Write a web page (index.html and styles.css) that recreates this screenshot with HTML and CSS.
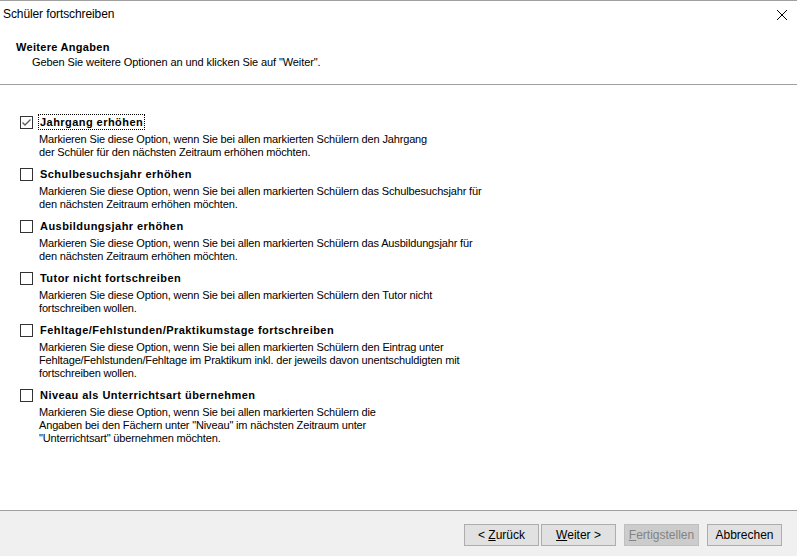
FILE: index.html
```html
<!DOCTYPE html>
<html>
<head>
  <title>Schüler fortschreiben</title>
  <link rel="stylesheet" href="styles.css">
</head>

<body>
  <div id="dialog">
    <div class="topline"></div>

    <div class="titlebar">
      <span class="title">Schüler fortschreiben</span>
      <span class="close">
        <svg width="12" height="12" viewBox="0 0 12 12">
          <path d="M1 1 L11 11 M11 1 L1 11" stroke="#000" stroke-width="1" fill="none"/>
        </svg>
      </span>
    </div>

    <div class="header">
      <div class="header-title">Weitere Angaben</div>
      <div class="header-sub">Geben Sie weitere Optionen an und klicken Sie auf "Weiter".</div>
    </div>

    <main class="options">
      <div class="option">
        <div class="option-row">
          <span class="check checked">
            <svg width="11" height="11" viewBox="0 0 11 11">
              <path d="M1.5 5.5 L4 8 L9.5 2.5" stroke="#5a5a5a" stroke-width="1.3" fill="none"/>
            </svg>
          </span>
          <span class="label focused">Jahrgang erhöhen</span>
        </div>
        <p class="desc">Markieren Sie diese Option, wenn Sie bei allen markierten Schülern den Jahrgang<br>der Schüler für den nächsten Zeitraum erhöhen möchten.</p>
      </div>

      <div class="option">
        <div class="option-row">
          <span class="check"></span>
          <span class="label">Schulbesuchsjahr erhöhen</span>
        </div>
        <p class="desc">Markieren Sie diese Option, wenn Sie bei allen markierten Schülern das Schulbesuchsjahr für<br>den nächsten Zeitraum erhöhen möchten.</p>
      </div>

      <div class="option">
        <div class="option-row">
          <span class="check"></span>
          <span class="label">Ausbildungsjahr erhöhen</span>
        </div>
        <p class="desc">Markieren Sie diese Option, wenn Sie bei allen markierten Schülern das Ausbildungsjahr für<br>den nächsten Zeitraum erhöhen möchten.</p>
      </div>

      <div class="option">
        <div class="option-row">
          <span class="check"></span>
          <span class="label">Tutor nicht fortschreiben</span>
        </div>
        <p class="desc">Markieren Sie diese Option, wenn Sie bei allen markierten Schülern den Tutor nicht<br>fortschreiben wollen.</p>
      </div>

      <div class="option">
        <div class="option-row">
          <span class="check"></span>
          <span class="label">Fehltage/Fehlstunden/Praktikumstage fortschreiben</span>
        </div>
        <p class="desc">Markieren Sie diese Option, wenn Sie bei allen markierten Schülern den Eintrag unter<br>Fehltage/Fehlstunden/Fehltage im Praktikum inkl. der jeweils davon unentschuldigten mit<br>fortschreiben wollen.</p>
      </div>

      <div class="option">
        <div class="option-row">
          <span class="check"></span>
          <span class="label">Niveau als Unterrichtsart übernehmen</span>
        </div>
        <p class="desc">Markieren Sie diese Option, wenn Sie bei allen markierten Schülern die<br>Angaben bei den Fächern unter "Niveau" im nächsten Zeitraum unter<br>"Unterrichtsart" übernehmen möchten.</p>
      </div>
    </main>

    <div class="footer">
      <button class="back">&lt; <u>Z</u>urück</button>
      <button class="next"><u>W</u>eiter &gt;</button>
      <button class="disabled"><u>F</u>ertigstellen</button>
      <button class="cancel">Abbrechen</button>
    </div>
  </div>
</body>
</html>
```

FILE: styles.css
```css
body {
  margin: 0;
  background: #FFFFFF;
  color: #000000;
  font-family: 'Liberation Sans', Arial, sans-serif;
  font-size: 11px;
}

#dialog {
  width: 797px;
  height: 556px;
  display: flex;
  flex-direction: column;
  overflow: hidden;
}

.topline {
  height: 1px;
  background: #A0A0A0;
}

.titlebar {
  height: 29px;
  display: flex;
  align-items: center;
  justify-content: space-between;
  padding: 0 9px 0 3px;
  font-size: 12px;
  letter-spacing: -0.1px;
}

.title {
  margin-top: -3px;
}

.close {
  display: flex;
  margin-top: -1px;
}

.header {
  height: 55px;
  box-sizing: border-box;
  padding: 11px 0 0 16px;
  border-bottom: 1px solid #A0A0A0;
  line-height: 13px;
}

.header-title {
  font-weight: bold;
  letter-spacing: 0.3px;
}

.header-sub {
  margin-top: 2px;
  padding-left: 16px;
  letter-spacing: -0.1px;
}

.options {
  flex: 1;
  padding: 28px 0 0 20px;
  border-bottom: 1px solid #A0A0A0;
}

.option {
  margin-bottom: 7px;
}

.option-row {
  display: flex;
  align-items: center;
  height: 16px;
  margin-top: 1px;
}

.check {
  width: 11px;
  height: 11px;
  border: 1px solid #333333;
  background: #FFFFFF;
  display: flex;
  margin-right: 6px;
}

.label {
  font-weight: bold;
  padding: 0 1px;
  margin-left: -1px;
  line-height: 14px;
  letter-spacing: 0.45px;
  border: 1px solid transparent;
}

.label.focused {
  border: 1px dotted #000000;
}

.desc {
  margin: 3px 0 0 19px;
  line-height: 13px;
  letter-spacing: -0.15px;
}

.footer {
  height: 45px;
  background: #F0F0F0;
  display: flex;
  justify-content: flex-end;
  align-items: flex-start;
  padding: 13px 15px 0 0;
  box-sizing: border-box;
}

button {
  width: 75px;
  height: 22px;
  padding: 0;
  margin-left: 8px;
  background: #E1E1E1;
  border: 1px solid #ADADAD;
  color: #000000;
  font-family: 'Liberation Sans', Arial, sans-serif;
  font-size: 12px;
}

button.next {
  margin-left: 2px;
}

button.disabled {
  background: #CCCCCC;
  border-color: #BFBFBF;
  color: #838383;
}
```
